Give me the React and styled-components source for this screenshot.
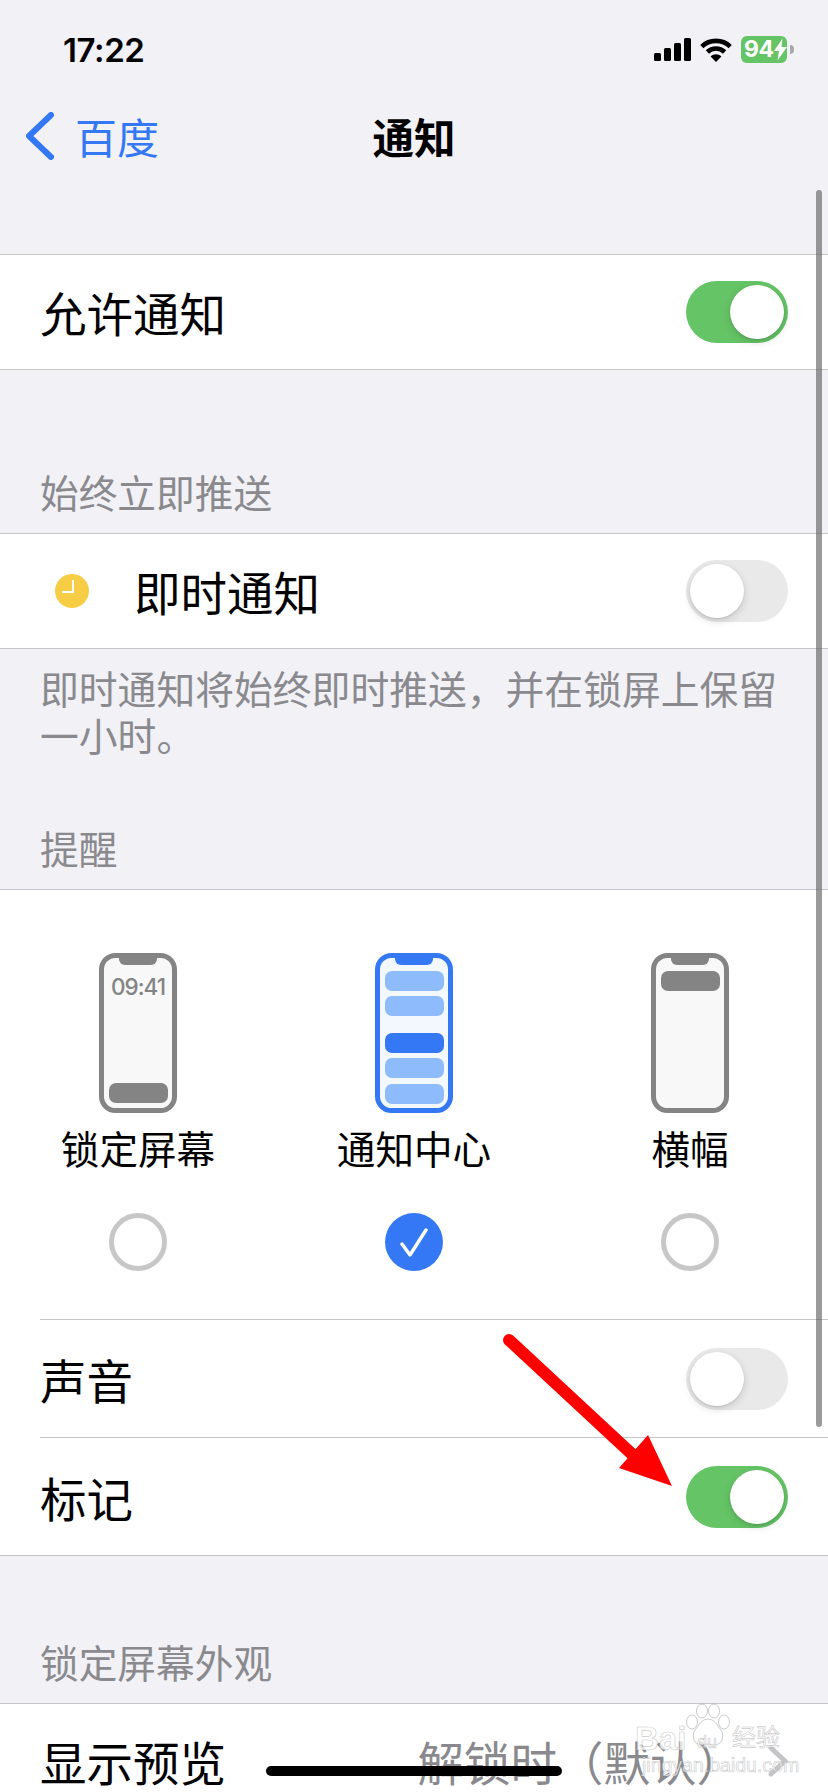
import React from "react";
import styled, { createGlobalStyle } from "styled-components";

const Global = createGlobalStyle`
  html, body { margin: 0; padding: 0; background: #f1f1f6; }
  * { box-sizing: border-box; }
`;

const CJK = `"Noto Sans CJK SC", "Noto Sans", sans-serif`;

const Page = styled.div`
  position: relative;
  width: 828px;
  height: 1792px;
  overflow: hidden;
  background: #f1f1f6;
  font-family: ${CJK};
  color: #000;
`;

const StatusBar = styled.div`
  height: 99px;
  padding: 0 34px 0 63px;
  display: flex;
  align-items: center;
  justify-content: space-between;
`;

const Time = styled.span`
  font-family: Inter, "Liberation Sans", sans-serif;
  font-size: 33px;
  font-weight: 600;
  letter-spacing: -0.4px;
`;

const StatusIcons = styled.div`
  display: flex;
  align-items: center;
  gap: 9px;
`;

const Battery = styled.div`
  position: relative;
  width: 46px;
  height: 27px;
  margin-right: 7px;
  border-radius: 6px;
  background: #65c466;
  color: #fff;
  font-family: Inter, "Liberation Sans", sans-serif;
  font-size: 23px;
  font-weight: 700;
  letter-spacing: -0.5px;
  line-height: 27px;
  padding-left: 3px;
  display: flex;
  align-items: center;
  &::after {
    content: "";
    position: absolute;
    right: -7px;
    top: 9px;
    width: 4px;
    height: 9px;
    border-radius: 0 4px 4px 0;
    background: #a9a9ad;
  }
`;

const Nav = styled.div`
  position: relative;
  height: 76px;
  margin-bottom: 79px;
  display: flex;
  align-items: center;
  justify-content: center;
`;

const Back = styled.div`
  position: absolute;
  left: 26px;
  top: 13px;
  display: flex;
  align-items: center;
  gap: 19px;
  color: #3478f6;
  font-size: 42px;
  line-height: 48px;
`;

const Title = styled.div`
  margin-top: -2px;
  font-size: 41.5px;
  font-weight: 700;
  line-height: 48px;
`;

const Group = styled.div`
  background: #fff;
  border-top: 1px solid #c6c6c8;
  border-bottom: 1px solid #c6c6c8;
`;

const Row = styled.div`
  height: ${(p) => p.$h || 114}px;
  margin-left: ${(p) => (p.$inset ? 40 : 0)}px;
  padding: 0 40px 0 ${(p) => (p.$inset ? 0 : 40)}px;
  display: flex;
  align-items: center;
  ${(p) => p.$divider && "border-top: 1px solid #c6c6c8;"}
`;

const Label = styled.div`
  flex: 1;
  font-size: 46.5px;
  line-height: 60px;
  white-space: nowrap;
`;

const ClockWrap = styled.div`
  width: 34px;
  height: 34px;
  margin: 0 45px 0 15px;
  display: flex;
`;

const Track = styled.div`
  position: relative;
  width: 102px;
  height: 62px;
  border-radius: 31px;
  background: ${(p) => (p.$on ? "#65c466" : "#e9e9ea")};
  flex: none;
  &::after {
    content: "";
    position: absolute;
    top: 4px;
    left: ${(p) => (p.$on ? 44 : 4)}px;
    width: 54px;
    height: 54px;
    border-radius: 50%;
    background: #fff;
    box-shadow: 0 3px 8px rgba(0, 0, 0, 0.14), 0 1px 2px rgba(0, 0, 0, 0.1);
  }
`;

const SectionHeader = styled.div`
  margin-top: ${(p) => p.$top}px;
  padding: 0 40px 19px;
  font-size: 38.7px;
  line-height: 46px;
  color: #8a8a8e;
`;

const Footer = styled.div`
  padding: 15px 40px 0;
  font-size: 38.8px;
  line-height: 47px;
  color: #8a8a8e;
`;

const Styles = styled.div`
  display: grid;
  grid-template-columns: repeat(3, 1fr);
  padding: 63px 0 48px;
`;

const StyleOption = styled.div`
  display: flex;
  flex-direction: column;
  align-items: center;
`;

const StyleName = styled.div`
  margin-top: 11px;
  margin-bottom: 43px;
  font-size: 38.6px;
  line-height: 46px;
`;

const Radio = styled.div`
  width: 58px;
  height: 58px;
  border-radius: 50%;
  border: ${(p) => (p.$checked ? "none" : "5px solid #c7c7c7")};
  background: ${(p) => (p.$checked ? "#3478f6" : "#fff")};
  display: flex;
  align-items: center;
  justify-content: center;
`;

const Value = styled.div`
  font-size: 46.5px;
  line-height: 60px;
  color: #8a8a8e;
  white-space: nowrap;
  margin-right: 25px;
`;

const Scrollbar = styled.div`
  position: absolute;
  left: 816px;
  top: 190px;
  width: 6px;
  height: 1237px;
  border-radius: 3px;
  background: rgba(100, 100, 100, 0.65);
`;

const HomeBar = styled.div`
  position: absolute;
  left: 266px;
  top: 1766px;
  width: 296px;
  height: 10px;
  border-radius: 5px;
  background: #000;
`;

const Overlay = styled.svg`
  position: absolute;
  left: 0;
  top: 0;
  pointer-events: none;
`;

const Watermark = styled.div`
  position: absolute;
  left: 635px;
  top: 1703px;
  width: 150px;
  height: 86px;
  color: rgba(255, 255, 255, 0.75);
  -webkit-text-stroke: 0.7px rgba(140, 140, 140, 0.45);
  font-family: "Liberation Sans", ${CJK};
`;

const WatermarkPaw = styled.svg`
  position: absolute;
  left: 50px;
  top: 0;
`;

const WatermarkBrand = styled.div`
  position: absolute;
  left: 0;
  top: 16px;
  font-size: 33px;
  line-height: 40px;
  font-weight: 700;
  white-space: nowrap;
`;

const WatermarkDu = styled.div`
  position: absolute;
  left: 62px;
  top: 29px;
  font-size: 18px;
  line-height: 20px;
  white-space: nowrap;
`;

const WatermarkName = styled.div`
  position: absolute;
  left: 97px;
  top: 19px;
  font-size: 24px;
  line-height: 32px;
  white-space: nowrap;
`;

const WatermarkUrl = styled.div`
  position: absolute;
  left: 7px;
  top: 51px;
  font-size: 19.5px;
  line-height: 22px;
  white-space: nowrap;
`;

const Phone = ({ kind }) => {
  const blue = kind === "center";
  const frame = blue ? "#3478f6" : "#848484";
  const screen = blue ? "#f3f8fe" : "#f8f8f8";
  const bars =
    kind === "lock"
      ? [[130, "#848484"]]
      : kind === "banner"
      ? [[18, "#848484"]]
      : [
          [18, "#8ebbfb"],
          [43, "#8ebbfb"],
          [80, "#3478f6"],
          [105, "#8ebbfb"],
          [131, "#8ebbfb"],
        ];
  return (
    <svg width="78" height="160" viewBox="0 0 78 160">
      <rect x="2.5" y="2.5" width="73" height="155" rx="14" fill={screen} stroke={frame} strokeWidth="5" />
      <path d="M20 2h38v4a6 6 0 0 1-6 6H26a6 6 0 0 1-6-6z" fill={frame} />
      {bars.map(([y, c]) => (
        <rect key={y} x="10" y={y} width="59" height="20" rx="7" fill={c} />
      ))}
      {kind === "lock" && (
        <text x="39" y="42" textAnchor="middle" fontFamily="Inter, sans-serif" fontSize="22.5" fontWeight="500" fill="#848484" letterSpacing="-1">
          09:41
        </text>
      )}
    </svg>
  );
};

const Toggle = ({ on }) => <Track $on={on} />;

const options = [
  { kind: "lock", name: "锁定屏幕" },
  { kind: "center", name: "通知中心", checked: true },
  { kind: "banner", name: "横幅" },
];

export default function App() {
  return (
    <Page>
      <Global />
      <StatusBar>
        <Time>17:22</Time>
        <StatusIcons>
          <svg width="37" height="23" viewBox="0 0 37 23" fill="#000">
            <rect x="0" y="15" width="7" height="8" rx="1.5" />
            <rect x="10" y="10" width="7" height="13" rx="1.5" />
            <rect x="20" y="5" width="7" height="18" rx="1.5" />
            <rect x="30" y="0" width="7" height="23" rx="1.5" />
          </svg>
          <svg width="32" height="24" viewBox="0 0 32 24" fill="none" stroke="#000" strokeWidth="4.6">
            <path d="M1.8 8.6C9.6 1 22.4 1 30.2 8.6" />
            <path d="M7.4 14c4.8-4.6 12.4-4.6 17.2 0" />
            <path d="M16 24l-5.4-5.6c3-2.8 7.8-2.8 10.8 0z" fill="#000" stroke="none" />
          </svg>
          <Battery>
            94
            <svg width="13" height="23" viewBox="0 0 13 22" fill="#fff">
              <path d="M8.5 0L0 12.5h5L3.5 22 13 8.5H7.5z" />
            </svg>
          </Battery>
        </StatusIcons>
      </StatusBar>

      <Nav>
        <Back>
          <svg width="30" height="48" viewBox="0 0 30 48" fill="none" stroke="#3478f6" strokeWidth="6" strokeLinecap="round" strokeLinejoin="round">
            <path d="M25 3L3 24l22 21" />
          </svg>
          百度
        </Back>
        <Title>通知</Title>
      </Nav>

      <Group>
        <Row>
          <Label>允许通知</Label>
          <Toggle on />
        </Row>
      </Group>

      <SectionHeader $top={98}>始终立即推送</SectionHeader>
      <Group>
        <Row>
          <ClockWrap>
            <svg width="34" height="34" viewBox="0 0 34 34">
              <circle cx="17" cy="17" r="17" fill="#f8cd46" />
              <path d="M18 6v12H7" fill="none" stroke="#fff" strokeWidth="2" />
            </svg>
          </ClockWrap>
          <Label>即时通知</Label>
          <Toggle />
        </Row>
      </Group>
      <Footer>即时通知将始终即时推送，并在锁屏上保留一小时。</Footer>

      <SectionHeader $top={66}>提醒</SectionHeader>
      <Group>
        <Styles>
          {options.map((o) => (
            <StyleOption key={o.kind}>
              <Phone kind={o.kind} />
              <StyleName>{o.name}</StyleName>
              <Radio $checked={o.checked}>
                {o.checked && (
                  <svg width="30" height="30" viewBox="0 0 30 30" fill="none" stroke="#fff" strokeWidth="3.4" strokeLinecap="round" strokeLinejoin="round">
                    <path d="M3 17l8 11L27 3" />
                  </svg>
                )}
              </Radio>
            </StyleOption>
          ))}
        </Styles>
        <Row $inset $divider $h={118}>
          <Label>声音</Label>
          <Toggle />
        </Row>
        <Row $inset $divider $h={118}>
          <Label>标记</Label>
          <Toggle on />
        </Row>
      </Group>

      <SectionHeader $top={82}>锁定屏幕外观</SectionHeader>
      <Group>
        <Row>
          <Label>显示预览</Label>
          <Value>解锁时（默认）</Value>
          <svg width="20" height="32" viewBox="0 0 20 32" fill="none" stroke="#c4c4c7" strokeWidth="5" strokeLinecap="round" strokeLinejoin="round">
            <path d="M3 3l14 13L3 29" />
          </svg>
        </Row>
      </Group>

      <Scrollbar />
      <HomeBar />
      <Overlay width="828" height="1792" viewBox="0 0 828 1792">
        <path d="M509 1340L634 1456" stroke="#ff0000" strokeWidth="12" strokeLinecap="round" fill="none" />
        <path d="M648 1435L672 1486 619 1468z" fill="#ff0000" />
      </Overlay>
      <Watermark>
        <WatermarkPaw width="46" height="46" viewBox="0 0 46 46" fill="rgba(255,255,255,0.75)" stroke="rgba(140,140,140,0.45)" strokeWidth="1">
          <ellipse cx="17" cy="8" rx="5.5" ry="7" />
          <ellipse cx="29" cy="8" rx="5.5" ry="7" />
          <ellipse cx="7" cy="19" rx="5.5" ry="7" />
          <ellipse cx="39" cy="19" rx="5.5" ry="7" />
          <path d="M23 16c6 0 9 6 13 11 4 6 1 15-7 15-3 0-4-1-6-1s-3 1-6 1c-8 0-11-9-7-15 4-5 7-11 13-11z" />
        </WatermarkPaw>
        <WatermarkBrand>Bai</WatermarkBrand>
        <WatermarkDu>du</WatermarkDu>
        <WatermarkName>经验</WatermarkName>
        <WatermarkUrl>jingyan.baidu.com</WatermarkUrl>
      </Watermark>
    </Page>
  );
}
